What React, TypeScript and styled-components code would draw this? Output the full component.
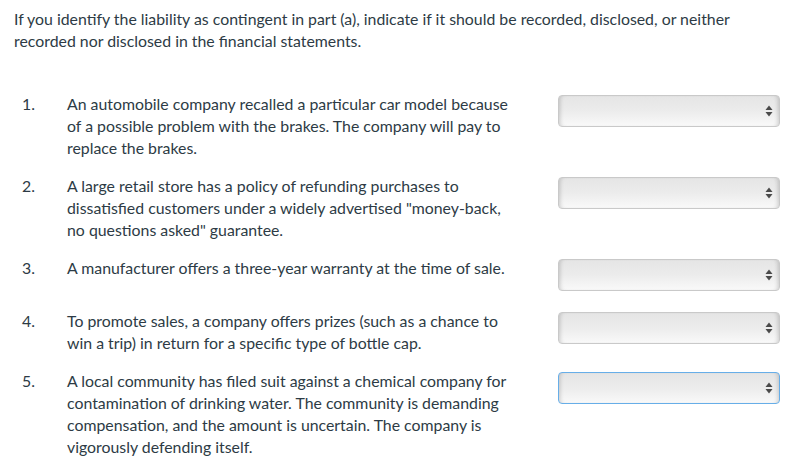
import React from 'react'
import styled, { createGlobalStyle } from 'styled-components'

const Global = createGlobalStyle`
	body {
		margin: 0;
		background: #fff;
		font-family: Lato, "Open Sans", sans-serif;
		color: #2d3b45;
	}
`

const Page = styled.div`
	padding: 8px 14px 0 14px;
	font-size: 15.85px;
	line-height: 22px;
`
const Intro = styled.p`
	margin: 0 0 41px 0;
`
const List = styled.div`
	display: flex;
	flex-direction: column;
	gap: 16px;
`
const Row = styled.div`
	display: flex;
	align-items: flex-start;
`
const Num = styled.div`
	width: 45px;
	padding-left: 8px;
	flex-shrink: 0;
`
const Text = styled.div`
	width: 450px;
	flex-shrink: 0;
`
const SelectWrap = styled.div`
	position: relative;
	margin: 2px 0 3px 41px;
`
const Select = styled.div<{ focused?: boolean }>`
	box-sizing: border-box;
	width: 222px;
	height: 32px;
	border-radius: 4px;
	border: 1px solid ${p => (p.focused ? '#67aee8' : '#c9c9c9')};
	background: linear-gradient(#e5e5e5, #ececec 50%, #f9f9f9);
	box-shadow: inset 4px 0 4px -3px rgba(0, 0, 0, 0.18), inset -4px 0 4px -3px rgba(0, 0, 0, 0.18);
	display: flex;
	align-items: center;
	justify-content: flex-end;
	padding-right: 6px;
`

const Arrows = () => (
	<svg width="8" height="12" viewBox="0 0 8 12">
		<path d="M4 0.5 L7.5 5 L0.5 5 Z" fill="#4a4a4a" />
		<path d="M4 11.5 L7.5 7 L0.5 7 Z" fill="#4a4a4a" />
	</svg>
)

const items = [
	'An automobile company recalled a particular car model because of a possible problem with the brakes. The company will pay to replace the brakes.',
	'A large retail store has a policy of refunding purchases to dissatisfied customers under a widely advertised "money-back, no questions asked" guarantee.',
	'A manufacturer offers a three-year warranty at the time of sale.',
	'To promote sales, a company offers prizes (such as a chance to win a trip) in return for a specific type of bottle cap.',
	'A local community has filed suit against a chemical company for contamination of drinking water. The community is demanding compensation, and the amount is uncertain. The company is vigorously defending itself.',
]

export default function App() {
	return <>
		<Global />
		<Page>
			<Intro>
				If you identify the liability as contingent in part (a), indicate if it should be recorded, disclosed, or neither recorded nor disclosed in the financial statements.
			</Intro>
			<List>
				{items.map((text, i) => (
					<Row key={i}>
						<Num>{i + 1}.</Num>
						<Text>{text}</Text>
						<SelectWrap>
							<Select focused={i === 4}>
								<Arrows />
							</Select>
						</SelectWrap>
					</Row>
				))}
			</List>
		</Page>
	</>
}
